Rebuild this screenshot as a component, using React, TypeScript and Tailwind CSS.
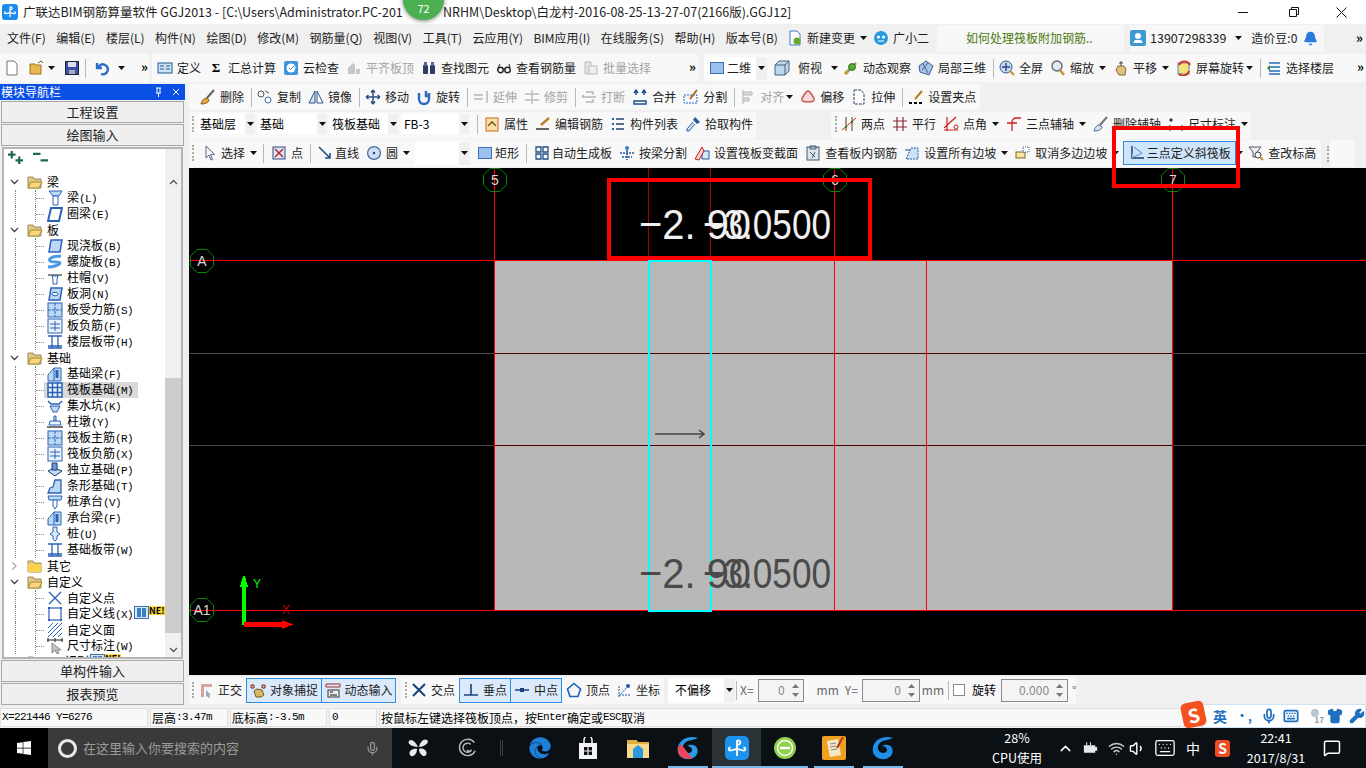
import React from "react";
import { FaEdge, FaWindows } from "react-icons/fa";
import { Bell, ChevronUp, Keyboard, MessageSquare, Mic, Shirt, Volume1, Wifi, Wrench } from "lucide-react";

const cjk = "font-['Noto_Sans_CJK_SC','Noto_Sans',sans-serif]";
const B = "#2a62b8"; // tree icon blue
const L = "#bcd8f5"; // tree icon light fill

const s = (children: React.ReactNode) => (
  <svg viewBox="0 0 16 16" className="w-4 h-4 shrink-0">
    {children}
  </svg>
);

const logoMark = <path d="M12 4v16M5.5 11.5c-2 0-2.500 3 0 3 2.500 0 4-1.500 6.500-1.500s4 1.500 6.500 1.500c2.500 0 2-3 0-3M12 8a2 2 0 1 0 0-3" fill="none" stroke="#fff" strokeWidth="1.8" />;

const icons: Record<string, React.ReactNode> = {
  new: s(<path d="M3 1h7l3 3v11H3z" fill="#fff" stroke="#777" />),
  open: s(<><path d="M1 14V4h5l1 1h5v9z" fill="#e8b84a" stroke="#9a7420" /><path d="M9 3l3-2 2 2" fill="none" stroke="#3a7a3a" /></>),
  save: s(<><rect x="1.500" y="1.500" width="13" height="13" fill="#3c4fa8" stroke="#223" /><rect x="4" y="2" width="8" height="5" fill="#dde" /><rect x="5" y="10" width="6" height="4" fill="#aab" /></>),
  undo: s(<path d="M3 3v5h5M4 8a5 5 0 1 1 3 6" fill="none" stroke="#2c6bc8" strokeWidth="2.400" />),
  def: s(<><rect x="1" y="3" width="14" height="10" fill="#cfe2f6" stroke="#1e5a96" /><path d="M3 6h4M3 9h4M9 6h4M9 9h4" stroke="#1e5a96" /></>),
  sigma: <span className="w-[16px] text-center font-bold text-[13px] font-['Liberation_Serif',serif] text-black">Σ</span>,
  cloud: s(<><rect x="1" y="1" width="14" height="14" rx="2" fill="#3d94dc" /><circle cx="8" cy="8" r="4.500" fill="#fff" /><path d="M6 8l1.500 1.500L11 6" fill="none" stroke="#2a7ac0" /></>),
  flat: s(<path d="M2 14V8l5-5 2 2v9zM10 14V9h4v5z" fill="#c4c8c8" />),
  find: s(<><rect x="2" y="5" width="5" height="9" rx="1" fill="#2d3b66" /><rect x="9" y="5" width="5" height="9" rx="1" fill="#2d3b66" /><rect x="3" y="2" width="3" height="4" fill="#56689a" /><rect x="10" y="2" width="3" height="4" fill="#56689a" /></>),
  glasses: s(<><circle cx="4.500" cy="10" r="2.700" fill="none" stroke="#222" strokeWidth="1.400" /><circle cx="11.500" cy="10" r="2.700" fill="none" stroke="#222" strokeWidth="1.400" /><path d="M7 9h2M2 8l2-4M14 8l-1-4" stroke="#222" /></>),
  batch: s(<><path d="M2 2h6v12H2z" fill="#e2e2e2" stroke="#bbb" /><path d="M6 6h8v8H6z" fill="#eee" stroke="#bbb" /></>),
  square: s(<rect x="1.500" y="2.500" width="13" height="11" fill="#9cc0ee" stroke="#3d6fb4" />),
  box: s(<><path d="M1 5l4-4h10v10l-4 4H1z" fill="#bcd6ee" stroke="#47607c" /><path d="M1 5h10v10M11 5l4-4" fill="none" stroke="#47607c" /></>),
  orbit: s(<><path d="M2 14L13 3" stroke="#8a9a70" strokeWidth="2.500" /><circle cx="9" cy="7" r="3.400" fill="#5aae30" stroke="#2d6a1d" /><circle cx="3.500" cy="12.500" r="2" fill="#c8a030" /></>),
  local: s(<path d="M8 1l7 5-4 9-9-3-1-6zM5 4l5 9M10 3l-6 7" fill="#a8c4e8" stroke="#3d5e92" />),
  full: s(<><circle cx="7" cy="7" r="6" fill="#c8d8ee" stroke="#31558c" /><path d="M7 3v8M3 7h8" stroke="#2a4a86" strokeWidth="1.400" /><path d="M11 11l4 4" stroke="#c89030" strokeWidth="2" /></>),
  zoom: s(<><circle cx="7" cy="6" r="5" fill="#e4eaf0" stroke="#5a6a7a" strokeWidth="1.400" /><path d="M10 10l4 5" stroke="#c89030" strokeWidth="2.400" /></>),
  pan: s(<><path d="M3 10l2-4h6l2 3-1 6H6z" fill="#e0c080" stroke="#886830" /><path d="M8 1v5M6 3h4" stroke="#445" /></>),
  rot: s(<><rect x="2" y="3" width="11" height="11" fill="#f6e27a" stroke="#4a86c0" /><path d="M3 5a6 6 0 0 1 11 0" fill="none" stroke="#d83020" strokeWidth="2" /><path d="M13 11a6 6 0 0 1-10 3" fill="none" stroke="#d83020" strokeWidth="2" /></>),
  floor: s(<><path d="M3 3h11M3 7h11M3 11h11M3 14h11" stroke="#1f6fb8" strokeWidth="1.600" /><path d="M1 8l3-3v6z" fill="#2d8a3a" /></>),
  brush: s(<><path d="M14 1L7 9" stroke="#666" strokeWidth="2" /><path d="M1 15c1-4 3-6 6-6l2 2c0 2-3 4-8 4z" fill="#e8a040" stroke="#7a5a20" /></>),
  copy: s(<><circle cx="4" cy="5" r="3" fill="none" stroke="#555" /><circle cx="11" cy="11" r="3" fill="none" stroke="#3c6cb0" /><path d="M8 2l4 2" stroke="#555" /></>),
  mirror: s(<><path d="M7 2L1 14h6z" fill="#d4e4f4" stroke="#2a558c" /><path d="M9 2l6 12H9z" fill="#fff" stroke="#2a558c" /></>),
  move: s(<path d="M8 1v14M1 8h14M8 1L6 3.500M8 1l2 2.500M8 15l-2-2.500M8 15l2-2.500M1 8l2.500-2M1 8l2.500 2M15 8l-2.500-2M15 8l-2.500 2" fill="none" stroke="#26507c" strokeWidth="1.400" />),
  rotate: s(<path d="M3 4v6a5 5 0 0 0 10 0V4M10 2v5h4" fill="none" stroke="#2f68c0" strokeWidth="2.400" />),
  extend: s(<path d="M14 2v12M1 6h9M1 10h9" fill="none" stroke="#b4b4b4" strokeWidth="1.400" />),
  trim: s(<path d="M8 1v14M1 5h14M1 11h14" fill="none" stroke="#bcbcbc" strokeWidth="1.400" />),
  breakI: s(<path d="M1 8h14M5 3h7v3M5 13h7v-3M1 8l2-2" fill="none" stroke="#b4b4b4" strokeWidth="1.400" />),
  merge: s(<path d="M2 12h12v3H2zM4 1v5M12 1v5M2 4l2-3 2 3M10 4l2-3 2 3" fill="none" stroke="#1d4f8c" strokeWidth="1.400" />),
  split: s(<><rect x="1" y="6" width="13" height="8" fill="none" stroke="#1f64c8" strokeDasharray="2 1" /><path d="M14 1L7 10" stroke="#b06820" strokeWidth="2" /></>),
  align: s(<path d="M3 1v14M3 3h9v3H3M3 9h6v3H3" fill="#ddd" stroke="#b4b4b4" />),
  offset: s(<path d="M8 2c3 0 3 4 6 7 1 3-1 4-6 4s-7-1-6-4c3-3 3-7 6-7z" fill="#f6d8d8" stroke="#c05a50" strokeWidth="1.500" />),
  stretch: s(<path d="M3 1h7l3 4v10H3z" fill="#fff" stroke="#2c3c74" strokeDasharray="3 1" />),
  grip: s(<><path d="M14 2L7 10" stroke="#b88020" strokeWidth="2" /><path d="M1 14h3M6 14h3M11 14h3" stroke="#000" strokeWidth="2" /></>),
  prop: s(<><rect x="2" y="2" width="12" height="13" fill="#f8e0a8" stroke="#c86820" /><path d="M4 10l4-4 4 4" fill="none" stroke="#806020" strokeWidth="1.600" /></>),
  edit: s(<><path d="M14 2L6 9" stroke="#b88020" strokeWidth="2.400" /><path d="M1 13h13" stroke="#333" strokeWidth="1.500" /></>),
  list: s(<><path d="M2 2h2v2H2zM2 7h2v2H2zM2 12h2v2H2z" fill="#2a5f9c" /><path d="M6 3h8M6 8h8M6 13h8" stroke="#56728e" strokeWidth="2" /></>),
  pick: s(<><path d="M10 1l5 5-3 2-4-4z" fill="#2a5a9c" /><path d="M8 6L2 13v2h2l6-7" fill="#cfe2f6" stroke="#2a5a9c" /></>),
  two: s(<><path d="M1 14L15 2" stroke="#d42020" /><path d="M5 1v14M11 1v14" stroke="#6b3a10" /><circle cx="5" cy="11" r="1.200" fill="#2a8a2a" /><circle cx="11" cy="6" r="1.200" fill="#2a8a2a" /></>),
  parallel: s(<path d="M1 5h14M1 11h14M5 1v14M11 1v14" stroke="#8a2a38" strokeWidth="1.200" />),
  angle: s(<><path d="M1 14h14M4 1v14M1 12L13 1" stroke="#c82020" strokeWidth="1.200" /><circle cx="13" cy="11" r="2" fill="none" stroke="#c82020" /></>),
  arc3: s(<path d="M6 15V6a4 4 0 0 1 4-4h5M1 7h10" fill="none" stroke="#d42020" strokeWidth="1.300" />),
  delaxis: s(<><path d="M14 1L7 9" stroke="#777" strokeWidth="2" /><path d="M1 15c1-4 3-6 6-6l2 2c0 2-3 4-8 4z" fill="#d8e4f0" stroke="#44658c" /></>),
  dim: s(<path d="M2 3h2v2H2zM2 15V9M14 15V9M2 12h12" fill="#2a8a2a" stroke="#223" />),
  select: s(<path d="M5 1v12l3-3 2 5 1.500-.6-2-5h4z" fill="#f4f6fa" stroke="#5a6c8a" />),
  point: s(<><rect x="2" y="2" width="12" height="12" fill="#dfe7f3" stroke="#2e4a80" /><path d="M4 4l8 8M12 4l-8 8" stroke="#b0202a" strokeWidth="1.400" /></>),
  line: s(<path d="M2 2l11 11M13 8v5H8" fill="none" stroke="#264f80" strokeWidth="1.600" />),
  circle: s(<><circle cx="8" cy="8" r="6.400" fill="#cfe0f6" stroke="#476c9c" strokeWidth="1.300" /><circle cx="8" cy="8" r="1.200" fill="#233f70" /></>),
  autoboard: s(<path d="M2 2h5v5H2zM9 2h5v5H9zM2 9h5v5H2zM9 9h5v5H9z" fill="#f6f9fd" stroke="#254f80" strokeWidth="1.300" />),
  beamsplit: s(<><circle cx="8" cy="3" r="2" fill="#3a7fc8" /><path d="M1 8h14M3 12h10M8 5v10" stroke="#1f5a9c" strokeWidth="1.600" strokeDasharray="2 1" /></>),
  varsec: s(<><path d="M8 6h7v8H8z" fill="#d8e6f8" stroke="#2456a8" /><path d="M1 14l7-12 2 4-5 9z" fill="#f4d0c8" stroke="#c82020" /></>),
  view: s(<><rect x="2" y="2" width="12" height="13" fill="#dce6ee" stroke="#3c5a70" /><path d="M5 1h6v3H5zM5 7l5 5M10 7l-3 6" fill="none" stroke="#3c5a70" /></>),
  slope: s(<><path d="M2 14l5-11h7v11z" fill="#cce0f6" stroke="#1c56a4" strokeDasharray="2 1" /><path d="M1 5h5" stroke="#184f96" /></>),
  cancel: s(<><rect x="1" y="7" width="9" height="6" fill="#f6e6a0" stroke="#7a6a20" /><rect x="8" y="2" width="6" height="5" fill="#fff" stroke="#2c5a9c" strokeDasharray="1 1" /></>),
  tri: s(<><path d="M3 1v12h12" fill="none" stroke="#1b3a72" strokeWidth="1.400" /><path d="M3 13L13 8 5 2" fill="#cce0f8" stroke="#4a88d0" /></>),
  level: s(<><path d="M1 2h12l-4 5v5H5V7z" fill="#ecf0f4" stroke="#556" /><circle cx="10" cy="10" r="3" fill="#f4f4f4" stroke="#444" /><path d="M12 12l3 3" stroke="#c08a30" strokeWidth="2" /></>),
  ortho: s(<><path d="M3 15V2h11v3H6v10z" fill="#dca0a0" /><path d="M8 8l5 5-2 .5 1 2-1.500.5-1-2L8 15z" fill="#9ab" /></>),
  snap: s(<><path d="M1 3h3v3H1zM12 3h3v3h-3z" fill="#e0d0a0" stroke="#7a2020" /><path d="M4 9l3-2 5 1 2 5-3 2H6z" fill="#d8b868" stroke="#7a5a20" /></>),
  dyn: s(<><path d="M1 2h14M1 5h14M1 2v3M15 2v3" stroke="#9c2a2a" /><rect x="3" y="8" width="11" height="7" fill="#eee" stroke="#333" /><path d="M5 10h3M5 13h7" stroke="#111" /></>),
  cross: s(<path d="M2 2l12 12M14 2L2 14" stroke="#19427c" strokeWidth="2" />),
  perp: s(<path d="M1 13h14M8 2v11" stroke="#19427c" strokeWidth="1.600" />),
  mid: s(<><path d="M1 8h14" stroke="#19427c" strokeWidth="1.500" /><rect x="6" y="6" width="4" height="4" fill="#19427c" /></>),
  vertex: s(<path d="M8 1.500L14.500 7 12 14.500H4L1.500 7z" fill="none" stroke="#1b62b8" strokeWidth="1.600" />),
  coord: s(<><path d="M3 15V3M3 13h12M5 12l7-8" stroke="#1c5aa8" strokeDasharray="2 1" /><circle cx="12" cy="4" r="2" fill="#1c5aa8" /></>),
  newchange: s(<><path d="M3 1h7l3 3v11H3z" fill="#fff" stroke="#3c7cc0" /><circle cx="10" cy="11" r="3.500" fill="#68a82c" /></>),
  xiaoer: s(<><circle cx="8" cy="8" r="7" fill="#2a9ae0" /><circle cx="5.500" cy="7" r="1.600" fill="#fff" /><circle cx="10.500" cy="7" r="1.600" fill="#fff" /><path d="M5 11h6" stroke="#fff" /></>),
  avatar: s(<><rect x="0" y="0" width="16" height="16" rx="2" fill="#3e98d4" /><circle cx="8" cy="6" r="3" fill="#fff" /><path d="M3 13h10l-2-3H5z" fill="#fff" /></>),
  logo: (
    <svg viewBox="0 0 24 24" className="w-4 h-4 shrink-0">
      <rect width="24" height="24" rx="5" fill="#1a8cf0" />
      {logoMark}
    </svg>
  ),
  // tree icons
  beam: s(<><path d="M2 1h13l-3 5H6z" fill={L} stroke={B} /><path d="M6 6h5v9H6z" fill="#fff" stroke={B} /></>),
  ring: s(<path d="M4 2h11l-3 13H1z" fill="#fff" stroke={B} strokeWidth="2" />),
  slab: s(<path d="M4 2h11l-2 12H2z" fill={L} stroke={B} strokeWidth="1.500" />),
  spiral: s(<path d="M14 2C5 2 1 5 3 7s10 0 10 2-7 4-12 4" fill="none" stroke="#4a9ae8" strokeWidth="3" />),
  cap: s(<><path d="M1 4h14v2H1z" fill="#888" /><path d="M5 6h6l-1 3v5H6V9z" fill="#fff" stroke={B} /></>),
  hole: s(<><path d="M4 2h11l-2 12H2z" fill={L} stroke={B} strokeWidth="1.500" /><ellipse cx="8" cy="8" rx="3" ry="1.800" fill="#fff" stroke={B} /></>),
  rebarS: s(<><rect x="1" y="1" width="14" height="14" fill={L} stroke={B} /><path d="M8 1v14M1 8h14" stroke={B} strokeDasharray="3 1" /></>),
  rebarF: s(<><rect x="1" y="1" width="14" height="14" fill="#eaf2fb" stroke={B} /><path d="M8 3v10M3 6h10M3 10h10" stroke={B} /></>),
  band: s(<path d="M1 2h14M1 14h14M5 2v12M11 2v12M1 12h14" stroke={B} strokeWidth="1.300" />),
  fbeam: s(<><path d="M1 15V9l6-7h7v13z" fill={L} stroke={B} /><path d="M7 15V2" stroke={B} /><path d="M10 4v8" stroke="#2a62b8" strokeWidth="3" /></>),
  raft: s(<><rect x="1" y="1" width="14" height="14" fill="#eaf2fb" stroke={B} strokeWidth="1.500" /><path d="M1 5.500h14M1 10.500h14M5.500 1v14M10.500 1v14" stroke={B} strokeWidth="1.500" /></>),
  pit: s(<><path d="M1 3l3 3h8l3-3" fill="none" stroke={B} strokeWidth="1.500" /><path d="M3 8h10l-3 6H6z" fill={L} stroke={B} /></>),
  pier: s(<><path d="M7 2h2v5H7z" fill={L} stroke={B} /><path d="M3 7h10l1 4H2z" fill="#eaf2fb" stroke={B} /><path d="M0 13h16" stroke="#777" strokeWidth="2" /></>),
  indep: s(<><path d="M1 9l6-3 8 3-7 5z" fill={L} stroke="#1b3f78" /><path d="M5 8V1h5v7z" fill="#6d95c8" stroke="#1b3f78" /></>),
  strip: s(<path d="M1 15l2-5 3-1 2-7h6v13z" fill={L} stroke={B} strokeWidth="1.300" />),
  capb: s(<><path d="M1 2h14l-1 4H2z" fill={L} stroke={B} /><path d="M6 6h4v6l-2 3-2-3z" fill="#fff" stroke={B} /></>),
  pile: s(<path d="M6 1h4v5l3 2-3 2v3l-2 2-2-2v-3L3 8l3-2z" fill="#dbe8f8" stroke={B} />),
  custP: s(<path d="M2 2l12 12M14 2L2 14" stroke={B} strokeWidth="1.400" />),
  custL: s(<><rect x="2" y="2" width="12" height="12" fill="#fff" stroke={B} strokeWidth="1.200" /><path d="M1 1h2v2H1zM13 1h2v2h-2zM1 13h2v2H1zM13 13h2v2h-2z" fill={B} /></>),
  custF: s(<path d="M1 6l5-5M1 11L11 1M1 15L15 1M6 15l9-9M11 15l4-4" stroke={B} />),
  dimT: s(<><path d="M0 2h16M1 0v4M8 0v4M15 0v4" stroke="#222" /><path d="M5 5v10l3-3 2 4 2-1-2-3h4z" fill="#c4c4c4" stroke="#888" /></>),
};

const Caret = () => (
  <svg viewBox="0 0 7 4" className="w-[7px] h-[4px] shrink-0">
    <path d="M0 0h7L3.500 4z" fill="#111" />
  </svg>
);

const Chevrons = () => <span className="text-[13px] leading-none text-black font-bold">»</span>;
const Sep = () => <div className="w-px h-[19px] bg-[#b8b8b8] shrink-0 -mr-[2px]" />;
const Grip = () => <div className="w-[2px] h-[16px] shrink-0 border-l-2 border-dotted border-[#aaa]" />;

type ToolProps = { i: string; t?: string; dim?: boolean; caret?: boolean; g?: string; className?: string };
const Tool = ({ i, t, dim, caret, g, className }: ToolProps) => (
  <div className={`flex items-center shrink-0 whitespace-nowrap text-[12px] ${g ?? "gap-[4px]"} ${dim ? "text-[#a4a4a4]" : "text-[#1c1c1c]"} ${className ?? ""}`}>
    {icons[i]}
    {t && <span>{t}</span>}
    {caret && <span className="ml-px flex"><Caret /></span>}
  </div>
);

const Panel = ({ className, children }: { className?: string; children: React.ReactNode }) => (
  <div className={`flex items-center bg-[#f8f8f8] rounded-[2px] shrink-0 ${className ?? ""}`}>{children}</div>
);

const CaretCell = ({ w }: { w: string }) => (
  <span className={`${w} h-full bg-[#f0f0f0] flex items-center justify-center shrink-0`}><Caret /></span>
);

const Combo = ({ t, w }: { t: string; w: string }) => (
  <div className={`${w} h-[20px] flex items-center bg-white text-[12px] pl-[2px] shrink-0 justify-between`}>
    <span>{t}</span>
    <CaretCell w="w-[10px]" />
  </div>
);

// ascii in a small mono face, the rest in cjk
const Mono = ({ t }: { t: string }) => (
  <>
    {t.split(/([\x00-\x7f]+)/).map((part, k) =>
      /^[\x00-\x7f]+$/.test(part) ? (
        <span key={k} className="font-['Liberation_Mono',monospace] text-[11px] tracking-[-0.6px]">{part}</span>
      ) : (
        <span key={k}>{part}</span>
      )
    )}
  </>
);

const menus = ["文件(F)", "编辑(E)", "楼层(L)", "构件(N)", "绘图(D)", "修改(M)", "钢筋量(Q)", "视图(V)", "工具(T)", "云应用(Y)", "BIM应用(I)", "在线服务(S)", "帮助(H)", "版本号(B)"];

type Node = { t: string; i?: string; folder?: "open" | "closed"; sel?: boolean; badge?: boolean };
const tree: Node[] = [
  { t: "梁", folder: "open" },
  { t: "梁(L)", i: "beam" },
  { t: "圈梁(E)", i: "ring" },
  { t: "板", folder: "open" },
  { t: "现浇板(B)", i: "slab" },
  { t: "螺旋板(B)", i: "spiral" },
  { t: "柱帽(V)", i: "cap" },
  { t: "板洞(N)", i: "hole" },
  { t: "板受力筋(S)", i: "rebarS" },
  { t: "板负筋(F)", i: "rebarF" },
  { t: "楼层板带(H)", i: "band" },
  { t: "基础", folder: "open" },
  { t: "基础梁(F)", i: "fbeam" },
  { t: "筏板基础(M)", i: "raft", sel: true },
  { t: "集水坑(K)", i: "pit" },
  { t: "柱墩(Y)", i: "pier" },
  { t: "筏板主筋(R)", i: "rebarS" },
  { t: "筏板负筋(X)", i: "rebarF" },
  { t: "独立基础(P)", i: "indep" },
  { t: "条形基础(T)", i: "strip" },
  { t: "桩承台(V)", i: "capb" },
  { t: "承台梁(F)", i: "fbeam" },
  { t: "桩(U)", i: "pile" },
  { t: "基础板带(W)", i: "band" },
  { t: "其它", folder: "closed" },
  { t: "自定义", folder: "open" },
  { t: "自定义点", i: "custP" },
  { t: "自定义线(X)", i: "custL", badge: true },
  { t: "自定义面", i: "custF" },
  { t: "尺寸标注(W)", i: "dimT" },
  { t: "CAD识别", folder: "closed", badge: true },
];

const Folder = ({ open }: { open: boolean }) => (
  <svg viewBox="0 0 16 14" className="w-[16px] h-[14px] shrink-0">
    <path d="M1 13V2h5l1 2h7v9z" fill="#e2c884" stroke="#9a8a5a" />
    {open ? <path d="M1 13l3-6h11l-3 6z" fill="#fbd678" stroke="#a88a3a" /> : <rect x="1" y="5" width="13" height="8" fill="#fbd24e" />}
  </svg>
);

const NewBadge = () => (
  <span className="flex items-start h-full ml-[1px]">
    <span className="w-[15px] h-[13px] bg-[#d8e8f8] border border-[#3a6ea8] flex justify-center gap-px items-center">
      <span className="w-[4px] h-[9px] bg-[#3a7fc8]" />
      <span className="w-[4px] h-[9px] bg-[#3a7fc8]" />
    </span>
    <span className="bg-[#ffd83a] text-[9px] leading-[9px] font-bold">NE!</span>
  </span>
);

const TreeRow = ({ n }: { n: Node }) =>
  n.folder ? (
    <div className="h-4 flex items-center text-[12px] text-black">
      <span className="w-[23px] pl-[6px] flex items-center shrink-0">
        <svg viewBox="0 0 9 6" className={`w-[9px] h-[6px] ${n.folder === "open" ? "" : "-rotate-90"}`}>
          <path d="M1 1l3.500 3.500L8 1" fill="none" stroke={n.folder === "open" ? "#444" : "#aaa"} strokeWidth="1.300" />
        </svg>
      </span>
      <Folder open={n.folder === "open"} />
      <span className="ml-[4px] whitespace-nowrap"><Mono t={n.t} /></span>
      {n.badge && <NewBadge />}
    </div>
  ) : (
    <div className="h-4 flex items-center text-[12px] text-black">
      <div className="ml-[11px] w-[21px] h-full shrink-0 border-x border-dotted border-[#888]" />
      <div className="w-[8px] border-t border-dotted border-[#888] shrink-0" />
      <div className={`flex items-center h-full pl-[3px] ${n.sel ? "bg-[#d9d9d9] pr-[5px]" : ""}`}>
        {icons[n.i!]}
        <span className="ml-[4px] whitespace-nowrap leading-4"><Mono t={n.t} /></span>
      </div>
      {n.badge && <NewBadge />}
    </div>
  );

const NavButton = ({ t }: { t: string }) => (
  <div className="h-[22px] mx-px border border-[#a8a8a8] bg-[#efefef] flex items-center justify-center text-[13px] text-[#222] shrink-0">{t}</div>
);

const SideNav = () => (
  <div className="w-[185px] h-full flex flex-col shrink-0 gap-px pb-[2px]">
    <div className="h-[16px] bg-[#0b50e4] text-white text-[12px] flex items-center justify-between pl-px pr-[5px] shrink-0">
      <span className="leading-none">模块导航栏</span>
      <span className="flex items-center gap-[9px]">
        <svg viewBox="0 0 9 10" className="w-[9px] h-[10px]"><path d="M3 1v5M6 1v5M2 6h5M4.500 6v4M2 1h5" fill="none" stroke="#fff" /></svg>
        <svg viewBox="0 0 8 8" className="w-[8px] h-[8px]"><path d="M1 1l6 6M7 1L1 7" stroke="#fff" /></svg>
      </span>
    </div>
    <NavButton t="工程设置" />
    <NavButton t="绘图输入" />
    <div className="flex-1 min-h-0 mx-[2px] bg-white border-2 border-[#b4b4b4] flex flex-col relative overflow-hidden">
      <div className="h-[22px] pl-[3px] pt-px flex items-start gap-[8px] shrink-0">
        <svg viewBox="0 0 18 16" className="w-[17px] h-[15px]"><path d="M1 5h8M5 1v8M9 11h8M13 7v8" stroke="#1a6a5a" strokeWidth="2.400" /></svg>
        <svg viewBox="0 0 18 16" className="w-[17px] h-[15px]"><path d="M1 4h8M9 11h8" stroke="#1a6a5a" strokeWidth="2.400" /></svg>
      </div>
      <div className="flex-1 min-h-0 overflow-hidden pt-[3px]">
        {tree.map((n) => <TreeRow key={n.t} n={n} />)}
      </div>
      {/* scrollbar */}
      <div className="absolute right-0 top-0 bottom-0 w-[16px] bg-[#f0f0f0] flex flex-col items-center">
        <svg viewBox="0 0 9 6" className="w-[9px] h-[6px] mt-[30px]"><path d="M1 5l3.500-3.500L8 5" fill="none" stroke="#555" strokeWidth="1.300" /></svg>
        <div className="w-full h-[255px] bg-[#cdcdcd] mt-[193px]" />
        <svg viewBox="0 0 9 6" className="w-[9px] h-[6px] mt-[14px]"><path d="M1 1l3.500 3.500L8 1" fill="none" stroke="#555" strokeWidth="1.300" /></svg>
      </div>
    </div>
    <NavButton t="单构件输入" />
    <NavButton t="报表预览" />
  </div>
);

const Spin = ({ className, v }: { className: string; v: string }) => (
  <div className={`${className} h-[23px] border border-[#8a8a8a] bg-[#f4f4f4] flex items-center justify-end text-[12px] text-[#888] shrink-0`}>
    <span>{v}</span>
    <span className="w-[15px] ml-[3px] flex flex-col items-center gap-[5px]">
      <svg viewBox="0 0 7 4" className="w-[7px] h-[4px]"><path d="M0 4h7L3.500 0z" fill="#777" /></svg>
      <svg viewBox="0 0 7 4" className="w-[7px] h-[4px]"><path d="M0 0h7L3.500 4z" fill="#777" /></svg>
    </span>
  </div>
);

const Toggle = ({ i, t, w }: { i: string; t: string; w: string }) => (
  <div className={`${w} h-[25px] border border-[#2f8be0] bg-[#dbeafa] flex items-center justify-center shrink-0`}>
    <Tool i={i} t={t} />
  </div>
);

// CAD view, coordinates are the page's minus the view's origin (189,168)
const Bubble = ({ x, y, t }: { x: number; y: number; t: string }) => (
  <g>
    <polygon
      points={[0, 45, 90, 135, 180, 225, 270, 315]
        .map((a) => `${x + 12.5 * Math.cos(((a + 22.5) * Math.PI) / 180)},${y + 12.5 * Math.sin(((a + 22.5) * Math.PI) / 180)}`)
        .join(" ")}
      fill="none"
      stroke="#0a8a0a"
    />
    <text x={x} y={y + 5} textAnchor="middle" fontSize="14" fill="#d8d8d8" fontFamily="'Liberation Sans',sans-serif">{t}</text>
  </g>
);

const Elev = ({ x, y, t, w, fill }: { x: number; y: number; t: string; w: number; fill: string }) => (
  <text x={x} y={y} fontSize="43" fill={fill} textLength={w} lengthAdjust="spacingAndGlyphs" fontFamily="'Liberation Sans',sans-serif" fontWeight="300" xmlSpace="preserve">{t}</text>
);

const CadView = () => (
  <div className="flex-1 min-h-0 bg-black overflow-hidden">
    <svg viewBox="0 0 1177 507" className="block w-[1177px] h-[507px]" shapeRendering="crispEdges">
      <rect x="306" y="93" width="678" height="349" fill="#b8b8b8" />
      <rect x="0" y="185" width="306" height="1" fill="#484848" />
      <rect x="984" y="185" width="193" height="1" fill="#484848" />
      <rect x="0" y="277" width="306" height="1" fill="#484848" />
      <rect x="984" y="277" width="193" height="1" fill="#484848" />
      <rect x="306" y="185" width="678" height="1" fill="#500000" />
      <rect x="306" y="277" width="678" height="1" fill="#500000" />
      <rect x="459" y="0" width="1" height="92" fill="#a00000" />
      <rect x="521" y="0" width="1" height="92" fill="#a00000" />
      <rect x="305" y="0" width="1" height="442" fill="#ff0000" />
      <rect x="645" y="0" width="1" height="442" fill="#ff0000" />
      <rect x="983" y="0" width="1" height="442" fill="#ff0000" />
      <rect x="737" y="92" width="1" height="350" fill="#ff0000" />
      <rect x="0" y="92" width="1177" height="1" fill="#ff0000" />
      <rect x="0" y="442" width="1177" height="1" fill="#ff0000" />
      <rect x="460" y="93" width="62" height="350" fill="none" stroke="#00ffff" strokeWidth="2" />
      <g shapeRendering="auto">
        <path d="M466 266h49M510 262l5 4-5 4" fill="none" stroke="#444" strokeWidth="1.600" />
        <Bubble x={306} y={12} t="5" />
        <Bubble x={646} y={12} t="6" />
        <Bubble x={984} y={12} t="7" />
        <Bubble x={13} y={93} t="A" />
        <Bubble x={13} y={442} t="A1" />
        <Elev x={450} y={71} t="−2. 90" w={112} fill="#f0f0f0" />
        <Elev x={514} y={71} t="−3.0500" w={128} fill="#f0f0f0" />
        <Elev x={450} y={420} t="−2. 90" w={112} fill="#4a4a4a" />
        <Elev x={514} y={420} t="−3.0500" w={128} fill="#4a4a4a" />
      </g>
      {/* ucs */}
      <rect x="53" y="417" width="4" height="40" fill="#00ff00" />
      <path d="M51 419l3-11h2l3 11z" fill="#00ff00" />
      <rect x="55" y="454" width="38" height="5" fill="#ff0000" />
      <path d="M93 452l11 4.500-11 4.500z" fill="#ff0000" />
      <g shapeRendering="auto">
        <text x="68" y="420" textAnchor="middle" fontSize="12" fill="#00ff00" fontFamily="'Liberation Sans',sans-serif">Y</text>
        <text x="97" y="446" textAnchor="middle" fontSize="12" fill="#c00000" fontFamily="'Liberation Sans',sans-serif">X</text>
      </g>
    </svg>
  </div>
);

const TaskApp = ({ w, active, line, children }: { w: string; active?: boolean; line?: string; children: React.ReactNode }) => (
  <div className={`${w} h-full flex items-center justify-center relative shrink-0 ${active ? "bg-[#2b3238]" : ""}`}>
    {children}
    {line && <div className={`absolute bottom-0 h-[2px] bg-[#76b9ed] ${line}`} />}
  </div>
);

const gPath = "M22 3C14 0 4 3 2 12c-2 9 6 13 12 12 6-1 9-6 7-11-2-4-7-4-10-2 2 0 5 1 5 4 0 3-4 4-7 2-3-2-3-7 1-10 3-2 8-2 12-4z";

const App = () => (
  <div className={`relative w-[1366px] h-[768px] overflow-hidden bg-[#f0f0f0] flex flex-col ${cjk}`}>
    {/* title */}
    <div className="h-[24px] bg-white flex items-center pl-[2px] text-[12.5px] text-[#222] shrink-0 whitespace-nowrap relative">
      {icons.logo}
      <span className="ml-[5px] w-[392px] overflow-hidden">广联达BIM钢筋算量软件 GGJ2013 - [C:\Users\Administrator.PC-201</span>
      <span className="ml-[28px]">NRHM\Desktop\白龙村-2016-08-25-13-27-07(2166版).GGJ12]</span>
      <div className="ml-auto flex items-center">
        <svg viewBox="0 0 10 10" className="w-[10px] h-[10px] mr-[41px]"><path d="M0 5.500h10" stroke="#111" /></svg>
        <svg viewBox="0 0 10 10" className="w-[10px] h-[10px] mr-[37px]"><path d="M.5 2.500h7v7h-7zM2.500 2.500v-2h7v7h-2" fill="none" stroke="#111" /></svg>
        <svg viewBox="0 0 11 11" className="w-[11px] h-[11px] mr-[19px]"><path d="M.5.5l10 10M10.500.5l-10 10" stroke="#111" /></svg>
      </div>
    </div>
    {/* menu */}
    <div className="h-[28px] flex items-center text-[12px] text-[#222] shrink-0 whitespace-nowrap pl-[7px]">
      <div className="w-[709px] flex items-center gap-[10.5px] shrink-0">
        {menus.map((m) => <span key={m}>{m}</span>)}
      </div>
      <div className="ml-[71px] shrink-0 w-0" />
      <Tool i="newchange" t="新建变更" caret />
      <div className="ml-[6px]"><Tool i="xiaoer" t="广小二" /></div>
      <div className="ml-[8px] w-[187px] h-[27px] bg-[#f7f7f7] text-[#4a7a10] flex items-center pl-[29px] rounded-[2px]">如何处理筏板附加钢筋..</div>
      <div className="ml-[6px] flex items-center h-[27px] bg-[#f7f7f7] pr-[6px] gap-[4px]">
        {icons.avatar}
        <span className="text-[12.5px]">13907298339</span>
        <span className="ml-[5px]"><Caret /></span>
        <span className="ml-[5px]">造价豆:0</span>
        <Bell size={15} className="ml-[2px] text-[#2a7ae0] fill-[#2a7ae0]" />
      </div>
      <span className="ml-auto mr-[3px]"><Chevrons /></span>
    </div>
    {/* main toolbar */}
    <div className="h-[32px] flex items-center shrink-0 pt-[2px] pb-[2px]">
      <Panel className="w-[149px] h-full pl-[4px] gap-[9px]">
        {icons.new}
        <div className="flex items-center gap-[3px]">{icons.open}<Caret /></div>
        {icons.save}
        <div className="-ml-[4px] flex"><Sep /></div>
        <div className="flex items-center gap-[8px]">{icons.undo}<Caret /></div>
        <span className="ml-[7px] -mt-[6px]"><Chevrons /></span>
      </Panel>
      <Panel className="ml-[3px] w-[546px] h-full pl-[5px] gap-[7px]">
        <Tool i="def" t="定义" />
        <Tool i="sigma" t="汇总计算" />
        <Tool i="cloud" t="云检查" />
        <Tool dim i="flat" t="平齐板顶" />
        <Tool i="find" t="查找图元" />
        <Tool i="glasses" t="查看钢筋量" />
        <Tool dim i="batch" t="批量选择" />
        <span className="ml-auto mr-[2px] -mt-[6px]"><Chevrons /></span>
      </Panel>
      <Panel className="ml-[6px] w-[663px] h-full gap-[7px] pr-[3px]">
        <div className="flex items-center justify-between bg-white h-[23px] w-[63px] pl-[5px] shrink-0">
          <Tool i="square" t="二维" g="gap-[2px]" />
          <CaretCell w="w-[11px]" />
        </div>
        <Tool i="box" t="俯视" caret g="gap-[8px]" />
        <Tool i="orbit" t="动态观察" className="-ml-[2px]" />
        <Tool i="local" t="局部三维" />
        <Sep />
        <Tool i="full" t="全屏" />
        <Tool i="zoom" t="缩放" caret />
        <Tool i="pan" t="平移" caret />
        <div className="flex items-center gap-[2px]">
          <Tool i="rot" t="屏幕旋转" />
          <Caret />
        </div>
        <Sep />
        <Tool i="floor" t="选择楼层" />
        <span className="ml-auto -mt-[6px]"><Chevrons /></span>
      </Panel>
    </div>
    <div className="flex-1 min-h-0 flex">
      <SideNav />
      <div className="flex-1 min-w-0 flex flex-col pl-[4px]">
        <div className="h-[27px] shrink-0 pb-px flex">
          <Panel className="w-[791px] h-full pl-[11px] gap-[7px]">
            <Tool i="brush" t="删除" />
            <Sep />
            <Tool i="copy" t="复制" />
            <Tool i="mirror" t="镜像" />
            <Sep />
            <Tool i="move" t="移动" />
            <Tool i="rotate" t="旋转" />
            <Sep />
            <Tool dim i="extend" t="延伸" />
            <Tool dim i="trim" t="修剪" />
            <Sep />
            <Tool dim i="breakI" t="打断" />
            <Tool i="merge" t="合并" />
            <Tool i="split" t="分割" />
            <Sep />
            <div className="flex items-center gap-[2px]"><Tool dim i="align" t="对齐" /><Caret /></div>
            <Tool i="offset" t="偏移" />
            <Tool i="stretch" t="拉伸" />
            <Sep />
            <Tool i="grip" t="设置夹点" />
          </Panel>
        </div>
        <div className="h-[29px] shrink-0 py-px flex">
          <Panel className="w-[567px] h-full pl-[3px] pb-[3px] gap-[3px]">
            <Grip />
            <div className="ml-px"><Combo t="基础层" w="w-[57px]" /></div>
            <Combo t="基础" w="w-[69px]" />
            <Combo t="筏板基础" w="w-[68px]" />
            <div className="ml-px"><Combo t="FB-3" w="w-[67px]" /></div>
            <div className="ml-[5px] flex"><Sep /></div>
            <div className="ml-[4px] flex gap-[7px]">
              <Tool i="prop" t="属性" />
              <Tool i="edit" t="编辑钢筋" />
              <Tool i="list" t="构件列表" />
              <Tool i="pick" t="拾取构件" />
            </div>
          </Panel>
          <Panel className="ml-[75px] w-[420px] h-full pl-[4px] pb-[3px] gap-[7px]">
            <Grip />
            <Tool i="two" t="两点" className="-ml-[3px]" />
            <Tool i="parallel" t="平行" />
            <Tool i="angle" t="点角" caret />
            <Tool i="arc3" t="三点辅轴" caret />
            <Tool i="delaxis" t="删除辅轴" />
            <Tool i="dim" t="尺寸标注" caret />
          </Panel>
        </div>
        <div className="h-[28px] shrink-0 pb-px flex">
          <Panel className="w-[1132px] h-full pl-[3px] pb-px gap-[7px]">
            <Grip />
            <Tool i="select" t="选择" caret />
            <div className="-ml-px flex"><Sep /></div>
            <Tool i="point" t="点" className="ml-px" />
            <Sep />
            <Tool i="line" t="直线" g="gap-[2px]" className="ml-px" />
            <Tool i="circle" t="圆" caret />
            <div className="-ml-[2px] w-[55px] h-[23px] bg-white flex items-center justify-end shrink-0"><CaretCell w="w-[11px]" /></div>
            <Tool i="square" t="矩形" g="gap-[2px]" />
            <Sep />
            <Tool i="autoboard" t="自动生成板" g="gap-[2px]" className="ml-[2px]" />
            <Tool i="beamsplit" t="按梁分割" />
            <Tool i="varsec" t="设置筏板变截面" />
            <Tool i="view" t="查看板内钢筋" />
            <Tool i="slope" t="设置所有边坡" caret />
            <Tool i="cancel" t="取消多边边坡" caret />
            <div className="-ml-[3px] h-[24px] w-[113px] bg-[#cfe5f9] border border-[#2f8be0] flex items-center justify-center shrink-0">
              <Tool i="tri" t="三点定义斜筏板" g="gap-[2px]" />
            </div>
            <div className="-ml-[7px] flex"><Caret /></div>
            <Tool i="level" t="查改标高" className="-ml-[2px]" />
          </Panel>
          <div className="ml-[6px] flex items-center"><Grip /></div>
          <div className="ml-px w-[24px] h-full bg-[#f8f8f8]" />
        </div>
        <CadView />
        <div className="h-[32px] shrink-0 flex items-center gap-[4px] pt-[2px] pb-[3px]">
          <Panel className="w-[208px] h-full pl-[3px] pb-px gap-[4px]">
            <Grip />
            <Tool i="ortho" t="正交" />
            <Toggle i="snap" t="对象捕捉" w="w-[76px]" />
            <div className="-ml-[5px]"><Toggle i="dyn" t="动态输入" w="w-[75px]" /></div>
          </Panel>
          <Panel className="w-[263px] h-full pl-[4px] pb-px gap-[4px]">
            <Grip />
            <Tool i="cross" t="交点" />
            <Toggle i="perp" t="垂点" w="w-[52px]" />
            <div className="-ml-[5px]"><Toggle i="mid" t="中点" w="w-[52px]" /></div>
            <Tool i="vertex" t="顶点" />
            <div className="ml-[2px]"><Tool i="coord" t="坐标" /></div>
          </Panel>
          <Panel className="w-[408px] h-full text-[12px] text-[#666] pb-px whitespace-nowrap">
            <div className="w-[67px] h-[23px] bg-white flex items-center justify-between text-black pl-[7px] shrink-0">不偏移<CaretCell w="w-[11px]" /></div>
            <div className="ml-px flex"><Sep /></div>
            <span className="ml-[4px] shrink-0">X=</span>
            <Spin className="ml-[4px] w-[46px]" v="0" />
            <span className="ml-[13px] shrink-0">mm</span>
            <span className="ml-[6px] shrink-0">Y=</span>
            <Spin className="ml-[4px] w-[58px]" v="0" />
            <span className="ml-[2px] shrink-0">mm</span>
            <div className="ml-[4px] flex"><Sep /></div>
            <div className="ml-[5px] w-[12px] h-[12px] border border-[#888] bg-white shrink-0" />
            <span className="ml-[7px] text-black shrink-0">旋转</span>
            <Spin className="ml-[5px] w-[67px]" v="0.000" />
            <span className="ml-[4px] shrink-0">°</span>
          </Panel>
        </div>
      </div>
    </div>
    {/* status */}
    <div className="h-[21px] shrink-0 flex items-center gap-[2px] text-[12px] text-black whitespace-nowrap relative">
      <div className="w-[148px] h-[19px] bg-[#f8f8f8] border border-[#e0e0e0] flex items-center pl-px"><Mono t="X=221446 Y=6276" /></div>
      <div className="w-[78px] h-[19px] bg-[#f8f8f8] border border-[#e0e0e0] flex items-center pl-px"><Mono t="层高:3.47m" /></div>
      <div className="w-[97px] h-[19px] bg-[#f8f8f8] border border-[#e0e0e0] flex items-center pl-px"><Mono t="底标高:-3.5m" /></div>
      <div className="w-[48px] h-[19px] bg-[#f8f8f8] border border-[#e0e0e0] flex items-center pl-[2px]"><Mono t="0" /></div>
      <div className="flex-1 h-[19px] bg-[#f8f8f8] border border-[#e0e0e0] flex items-center pl-px"><Mono t="按鼠标左键选择筏板顶点，按Enter确定或ESC取消" /></div>
    </div>
    {/* taskbar */}
    <div className="h-[40px] shrink-0 bg-[#0a1014] flex items-center text-white relative">
      <div className="w-[48px] h-full flex items-center justify-center bg-black"><FaWindows size={16} /></div>
      <div className="w-[344px] h-full bg-[#3a3a3a] flex items-center pl-[10px] text-[13px] text-[#9a9a9a]">
        <div className="w-[19px] h-[19px] rounded-full border-[3px] border-[#e8e8e8] shrink-0" />
        <span className="ml-[6px]">在这里输入你要搜索的内容</span>
        <Mic size={15} className="ml-auto mr-[12px] text-[#999]" />
      </div>
      <TaskApp w="w-[52px]">
        <svg viewBox="0 0 22 22" className="w-[22px] h-[22px]"><path d="M11 10C9 5 4 1 2 4s3 6 9 6zM12 10c1-5 5-9 8-7s-2 7-8 7zM12 12c5-2 9 3 7 6s-7-1-7-6zM10 12c-5-1-9 3-7 6s7 0 7-6z" fill="#e8eaec" /></svg>
      </TaskApp>
      <TaskApp w="w-[46px]">
        <svg viewBox="0 0 22 22" className="w-[20px] h-[20px]"><path d="M19 5A9 9 0 1 0 20 14M15 7a5 5 0 1 0 1 6c-1 2-4 2-5 0" fill="none" stroke="#b8b8b8" strokeWidth="1.600" /></svg>
      </TaskApp>
      <div className="w-[3px] h-[16px] border-x border-[#3a3f44] ml-[10px]" />
      <div className="w-[13px]" />
      <TaskApp w="w-[48px]"><FaEdge size={22} className="text-[#1e7fd8]" /></TaskApp>
      <TaskApp w="w-[48px]">
        <svg viewBox="0 0 20 22" className="w-[20px] h-[22px]"><path d="M1 6h18v16H1z" fill="#f4f4f4" /><path d="M6 6V3a4 4 0 0 1 8 0v3" fill="none" stroke="#f4f4f4" strokeWidth="1.500" /><path d="M6 10h3.400v3.400H6zM10.600 10H14v3.400h-3.400zM6 14.600h3.400V18H6zM10.600 14.600H14V18h-3.400z" fill="#0c1116" /></svg>
      </TaskApp>
      <TaskApp w="w-[52px]">
        <svg viewBox="0 0 22 20" className="w-[22px] h-[20px]"><path d="M0 2h9l2 2h11v16H0z" fill="#f6dc8a" /><path d="M0 2h9l2 2h11v2H0z" fill="#e0b040" /><path d="M6 11l5-4 5 4v9H6z" fill="#2a9ae0" /></svg>
      </TaskApp>
      <TaskApp w="w-[48px]" line="left-[4px] right-[4px]">
        <svg viewBox="0 0 24 26" className="w-[24px] h-[26px]"><path d={gPath} fill="#2a9ae8" /><path d="M2 12c-1 5 1 9 5 11l7 1c1 0 2 0 2-1L5 9z" fill="#e8465a" /></svg>
      </TaskApp>
      <TaskApp w="w-[49px]" active line="left-0 right-0">
        <svg viewBox="0 0 24 24" className="w-[24px] h-[24px]"><rect width="24" height="24" rx="5" fill="#1c94ee" />{logoMark}</svg>
      </TaskApp>
      <TaskApp w="w-[47px]" line="left-0 right-0">
        <svg viewBox="0 0 24 24" className="w-[24px] h-[24px]"><circle cx="12" cy="12" r="11" fill="#8ed24a" /><circle cx="12" cy="12" r="7.500" fill="none" stroke="#fff" strokeWidth="1.500" /><path d="M7 12h10" stroke="#fff" strokeWidth="2.400" /></svg>
      </TaskApp>
      <TaskApp w="w-[51px]" line="left-[6px] right-[5px]">
        <svg viewBox="0 0 24 24" className="w-[24px] h-[24px]"><rect width="24" height="24" rx="2" fill="#f0a020" /><path d="M5 5l11-2 3 16-11 2z" fill="#f4e8c8" /><path d="M8 8l6-1M8 11l6-1M9 14l6-1" stroke="#888" /><path d="M21 1l-6 11" stroke="#c03020" strokeWidth="2" /></svg>
      </TaskApp>
      <TaskApp w="w-[48px]" line="left-[4px] right-[4px]">
        <svg viewBox="0 0 24 26" className="w-[24px] h-[26px]"><path d={gPath} fill="#1e8ee8" /></svg>
      </TaskApp>
      <div className="ml-auto flex items-center h-full shrink-0">
        <div className="w-[60px] mr-[10px] flex flex-col items-center text-[12.5px] leading-[20px]">
          <span>28%</span>
          <span>CPU使用</span>
        </div>
        <div className="flex items-center">
          <ChevronUp size={17} />
          <svg viewBox="0 0 18 14" className="ml-[8px] w-[17px] h-[14px]"><path d="M2 4h12v8H2zM14 6h2v4h-2z" fill="#e8e8e8" /><path d="M5 1v3M9 1v3" stroke="#fff" /></svg>
          <Wifi size={17} className="ml-[9px] text-[#ccc]" />
          <Volume1 size={17} className="ml-[4px]" />
          <Keyboard size={22} className="ml-[8px]" strokeWidth={1.4} />
          <span className="text-[14px] ml-[10px]">中</span>
          <span className="ml-[15px] w-[15px] h-[17px] bg-[#f04a20] rounded-[3px] text-[14px] leading-[17px] font-bold text-center">S</span>
        </div>
        <div className="ml-[11px] w-[70px] flex flex-col items-center text-[12.5px] leading-[20px]">
          <span>22:41</span>
          <span>2017/8/31</span>
        </div>
        <MessageSquare size={18} className="ml-[12px] mr-[25px]" />
      </div>
    </div>

    {/* overlays */}
    <div className="absolute left-[403px] -top-[21px] w-[41px] h-[41px] rounded-full bg-[#4caf50] shadow-[0_1px_4px_rgba(0,0,0,0.5)] flex items-end justify-center pb-[6px] text-white text-[11px] leading-none">72</div>
    <div className="absolute left-[607px] top-[178px] w-[265px] h-[82px] border-4 border-[#f00]" />
    <div className="absolute left-[1112px] top-[126px] w-[128px] h-[62px] border-4 border-[#f00]" />
    <div className="absolute left-[1182px] top-[704px] w-[184px] h-[24px] flex items-center">
      <div className="absolute left-0 -top-[2px] w-[23px] h-[25px] rounded-[5px] bg-[#f4511e] text-white font-bold text-[19px] leading-[25px] text-center -rotate-12 z-10">S</div>
      <div className="ml-[20px] flex-1 h-full bg-white border border-[#cfe3f7] flex items-center pl-[10px] text-[#1f6fc0]">
        <span className="text-[14px] font-bold">英</span>
        <span className="ml-[9px] text-[12px] font-bold">•,</span>
        <Mic size={16} strokeWidth={2.6} className="ml-[9px]" />
        <Keyboard size={16} strokeWidth={2.6} className="ml-[6px]" />
        <span className="ml-[8px] relative w-[16px] h-[16px] flex justify-center shrink-0">
          <span className="w-[8px] h-[8px] rounded-full bg-[#b8c4d0] mt-[1px]" />
          <span className="absolute -right-[1px] bottom-0 text-[8px] leading-none font-bold text-[#8a98a8]">17</span>
        </span>
        <Shirt size={16} className="ml-[4px] fill-[#1f6fc0]" />
        <Wrench size={16} className="ml-[6px] fill-[#1f6fc0]" />
      </div>
    </div>
  </div>
);

export default App;
